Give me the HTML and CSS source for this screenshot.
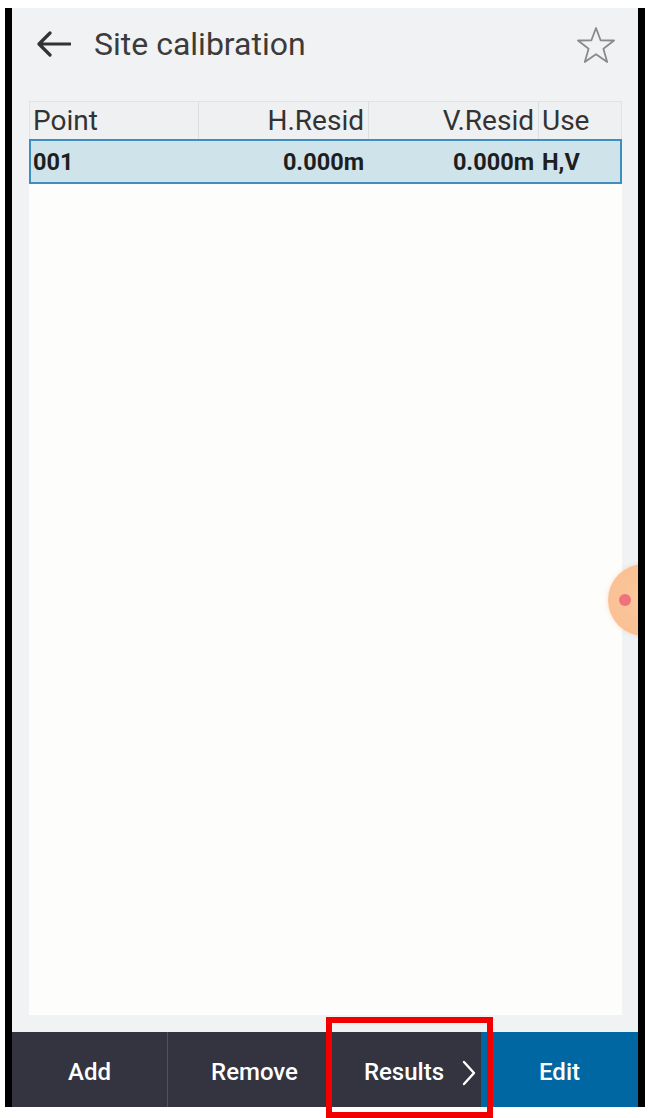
FILE: index.html
```html
<!DOCTYPE html>
<html lang="en">
<head>
<meta charset="utf-8">
<title>Site calibration</title>
<link rel="stylesheet" href="styles.css">
</head>
<body>
<div class="phone">
  <header class="appbar">
    <svg class="back" width="34" height="26" viewBox="0 0 34 26" aria-hidden="true">
      <path d="M33 13H3M13 2L2 13l11 11" fill="none" stroke="#333" stroke-width="3.2" stroke-linecap="round" stroke-linejoin="round"/>
    </svg>
    <h1 class="title">Site calibration</h1>
    <svg class="star" width="40" height="38" viewBox="0 0 40 38" aria-hidden="true">
      <polygon points="20,2 24.6,14.3 38,14.5 27.4,22.7 31.2,36 20,28.2 8.8,36 12.6,22.7 2,14.5 15.4,14.3" fill="none" stroke="#8a8a8a" stroke-width="1.8" stroke-linejoin="round"/>
    </svg>
  </header>
  <main class="content">
    <div class="row head">
      <div class="cell left">Point</div>
      <div class="cell right">H.Resid</div>
      <div class="cell right">V.Resid</div>
      <div class="cell left use">Use</div>
    </div>
    <div class="row data">
      <div class="cell left">001</div>
      <div class="cell right">0.000m</div>
      <div class="cell right">0.000m</div>
      <div class="cell left use">H,V</div>
    </div>
    <div class="list"></div>
  </main>
  <nav class="bottombar">
    <div class="btn">Add</div>
    <div class="btn remove">Remove</div>
    <div class="btn results">Results
      <svg class="chev" width="14" height="26" viewBox="0 0 14 26" aria-hidden="true">
        <path d="M2 2l10 11L2 24" fill="none" stroke="#fff" stroke-width="2.4" stroke-linecap="round" stroke-linejoin="round"/>
      </svg>
    </div>
    <div class="btn edit">Edit</div>
  </nav>
  <div class="bubble"><span class="dot"></span></div>
</div>
<div class="highlight"></div>
</body>
</html>
```

FILE: styles.css
```css
html, body {
  margin: 0;
  padding: 0;
}
body {
  background: #ffffff;
  width: 650px;
  height: 1118px;
  position: relative;
  overflow: hidden;
  font-family: Roboto, "Noto Sans", "Liberation Sans", sans-serif;
}
.phone {
  box-sizing: border-box;
  margin: 8px 0 0 5px;
  width: 640px;
  height: 1099px;
  border-left: 7px solid #000;
  border-right: 7px solid #000;
  background: #f1f2f4;
  display: flex;
  flex-direction: column;
  position: relative;
  overflow: hidden;
}
.appbar {
  height: 72px;
  flex: 0 0 72px;
  display: flex;
  align-items: center;
}
.back {
  margin-left: 25px;
  flex: none;
}
.title {
  margin: 0 0 0 23px;
  font-size: 32px;
  font-weight: 400;
  color: #3b3b3b;
}
.star {
  margin-left: auto;
  margin-right: 22px;
  margin-top: 2px;
  flex: none;
}
.content {
  flex: 1;
  display: flex;
  flex-direction: column;
  padding: 21px 16px 17px 17px;
}
.row {
  display: grid;
  grid-template-columns: 169px 170px 170px 1fr;
  box-sizing: border-box;
}
.head {
  height: 38px;
  background: #eef0f2;
  border: 1px solid #e0e2e4;
  border-bottom: none;
  font-size: 28px;
  color: #333;
}
.head .cell {
  border-right: 1px solid #dcdee0;
}
.head .cell:last-child {
  border-right: none;
}
.data {
  height: 45px;
  background: #cfe3ea;
  border: 2px solid #3d8fc1;
  font-size: 23.5px;
  font-weight: 700;
  color: #1e1e1e;
}
.cell {
  display: flex;
  align-items: center;
  padding: 0 4px;
  white-space: nowrap;
  overflow: hidden;
}
.cell.right {
  justify-content: flex-end;
}
.head .cell.left {
  padding-left: 3px;
}
.data .cell:first-child {
  padding-left: 2px;
}
.data .cell.right {
  padding-right: 6px;
}
.head .cell.right {
  padding-right: 4px;
}
.head .use {
  padding-left: 2px;
}
.data .use {
  padding-left: 2px;
}
.list {
  flex: 1;
  background: #fdfdfb;
}
.bottombar {
  height: 75px;
  flex: 0 0 75px;
  display: grid;
  grid-template-columns: 156px 162px 151px 1fr;
  background: #33343f;
}
.btn {
  display: flex;
  align-items: center;
  justify-content: center;
  padding-top: 5px;
  color: #fff;
  font-size: 24px;
  font-weight: 500;
  border-right: 1px solid #50515b;
}
.remove {
  padding-left: 12px;
}
.results {
  justify-content: flex-end;
  padding-right: 5px;
  gap: 18px;
  border-right: none;
}
.chev {
  flex: none;
  margin-top: 1px;
}
.edit {
  background: #0067a2;
  border-right: none;
}
.bubble {
  position: absolute;
  left: 596px;
  top: 556px;
  width: 72px;
  height: 72px;
  border-radius: 50%;
  background: radial-gradient(circle at 45% 50%, #fbc79b 0%, #f9c093 70%, #f8c9a6 100%);
  box-shadow: 0 0 4px rgba(250, 190, 150, 0.5);
}
.dot {
  position: absolute;
  left: 11px;
  top: 30px;
  width: 12px;
  height: 12px;
  border-radius: 50%;
  background: #f2727c;
}
.highlight {
  position: absolute;
  left: 326px;
  top: 1017px;
  width: 167px;
  height: 101px;
  box-sizing: border-box;
  border: 6px solid #f20000;
}
```
